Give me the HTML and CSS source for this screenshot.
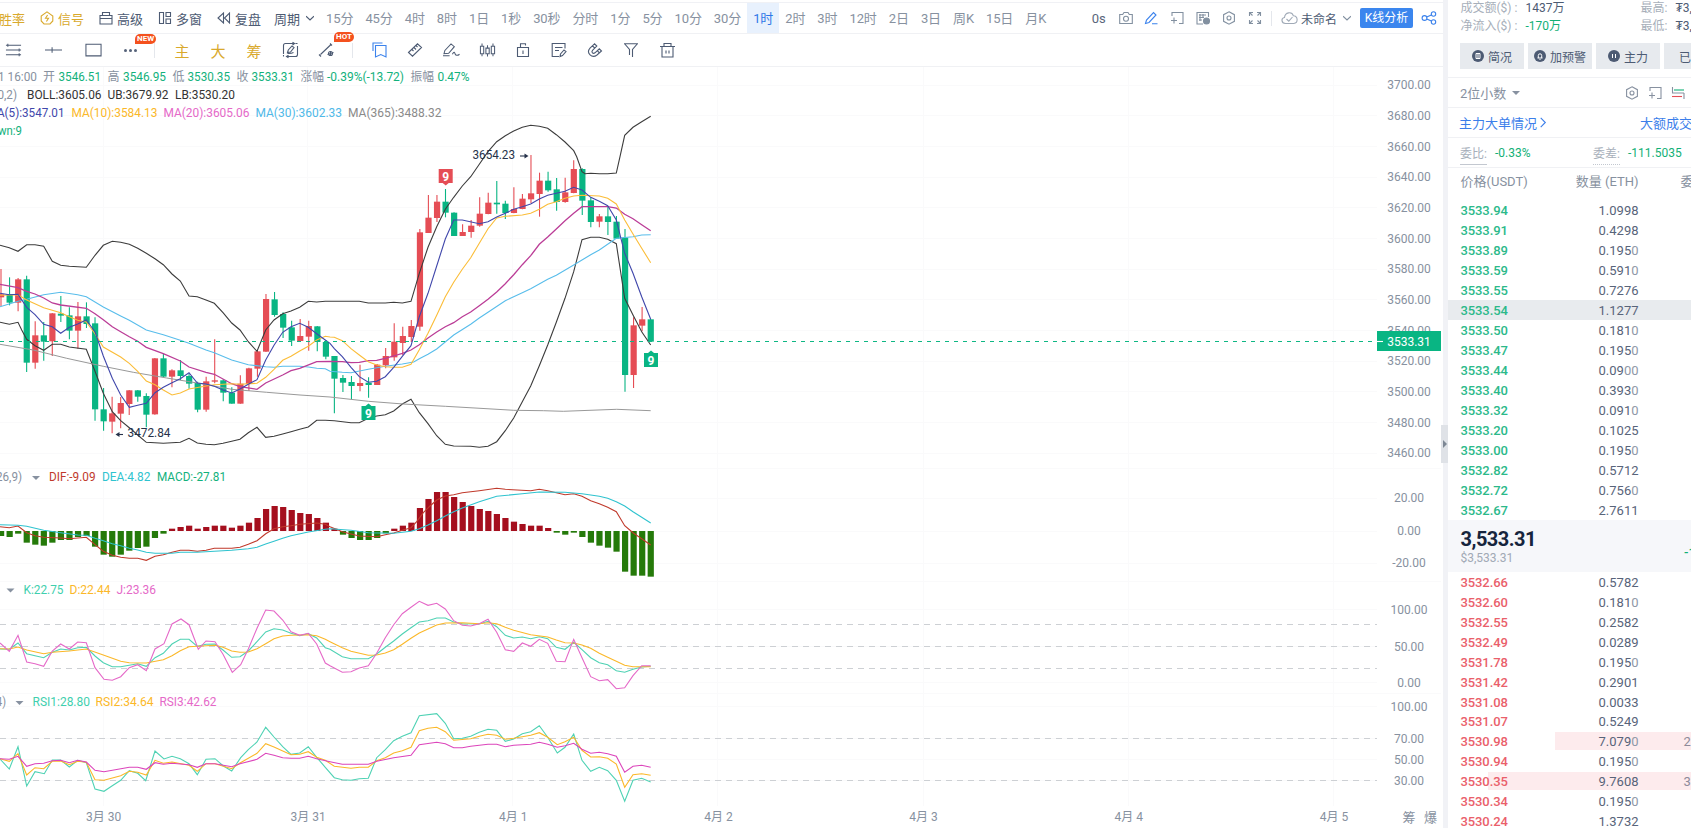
FILE: index.html
```html
<!DOCTYPE html>
<html lang="zh-CN">
<head>
<meta charset="UTF-8" />
<meta name="viewport" content="width=device-width, initial-scale=1" />
<title>ETH/USDT K线</title>
<link rel="stylesheet" href="styles.css">
</head>
<body>

<!-- shared icons -->
<svg class="defs" width="0" height="0">
  <symbol id="i-hex" viewBox="0 0 14 14"><path d="M7 .8 12.4 3.7v6.6L7 13.2 1.6 10.3V3.7z"/><circle cx="7" cy="7" r="2"/></symbol>
  <symbol id="i-frame" viewBox="0 0 14 14"><path d="M2 5V1.500h11v11H9M1 9.500h6M4 6.500v6"/></symbol>
  <symbol id="i-down" viewBox="0 0 8 8"><path d="M0 2.200 4 6 8 2.200"/></symbol>
</svg>

<div class="app">
  <main class="left">
    <div class="bar periods">
      <span class="tool gold">胜率</span>
      <span class="tool gold"><svg class="ico" viewBox="0 0 14 14"><path d="M7 .9 12.800 5v5L10 13H4L1.200 10V5z"/><path d="M7.600 4 5.500 7.300h3L6.400 10.500"/></svg>信号</span>
      <span class="tool"><svg class="ico" viewBox="0 0 14 14"><path d="M1 4.500h12v8.500H1zM1 7.500h12M3.500 4.500V1.500h7v3"/></svg>高级</span>
      <span class="tool"><svg class="ico" viewBox="0 0 14 14"><path d="M1.500 1.500h4v11h-4zM8 1.500h4.500v4H8zM8 8h4.500v4.500H8z"/></svg>多窗</span>
      <span class="tool"><svg class="ico" viewBox="0 0 14 14"><path d="M6.500 2v10L1 7zM12.500 2v10L7.500 7z"/></svg>复盘</span>
      <span class="tool cycle">周期<svg class="ico tiny"><use href="#i-down"/></svg></span>
      <div class="period-list">
        <span>15分</span><span>45分</span><span>4时</span><span>8时</span><span>1日</span><span>1秒</span><span>30秒</span><span>分时</span><span>1分</span><span>5分</span><span>10分</span><span>30分</span><span class="active">1时</span><span>2时</span><span>3时</span><span>12时</span><span>2日</span><span>3日</span><span>周K</span><span>15日</span><span>月K</span>
      </div>
      <div class="actions">
        <span class="cell dark">0s</span>
        <span class="cell"><svg class="ico" viewBox="0 0 14 14"><path d="M.7 3.500h3L5 1.500h4l1.300 2h3v9H.7z"/><circle cx="7" cy="7.800" r="2.500"/></svg></span>
        <span class="cell blue"><svg class="ico" viewBox="0 0 14 14"><path d="M1.500 12.500 2.500 9 9.500 1.500l2.500 2.500L5 11.500zM8 12.800h5.500"/></svg></span>
        <span class="cell"><svg class="ico"><use href="#i-frame"/></svg></span>
        <span class="cell"><svg class="ico" viewBox="0 0 14 14"><path d="M7 13H1V1.500h11.500V6M3 4h7M3 6.500h5M3 9h3M4 3v7M7 3v4"/><circle cx="10.500" cy="10" r="3" class="fill"/></svg></span>
        <span class="cell"><svg class="ico"><use href="#i-hex"/></svg></span>
        <span class="cell"><svg class="ico" viewBox="0 0 14 14"><path d="M1.500 5V1.500H5M9 1.500h3.500V5M12.500 9v3.500H9M5 12.500H1.500V9M2 2l2.500 2.500M12 2 9.500 4.500M12 12 9.500 9.500M2 12l2.500-2.500"/></svg></span>
        <span class="sep"></span>
        <span class="layout"><svg class="ico cloud" viewBox="0 0 17 14"><path d="M4.500 12.500C.2 12.300-.2 7 3.500 6.500 4 1 11 .2 12.300 4.700c5 .2 5 7.500.5 7.800zM5.500 8l2.300 2.200L11.500 6"/></svg>未命名<svg class="ico tiny"><use href="#i-down"/></svg></span>
        <button class="analyse">K线分析</button>
        <svg class="ico share" viewBox="0 0 16 14"><circle cx="3.500" cy="7" r="2.400"/><circle cx="12.500" cy="3" r="2.200"/><circle cx="12.500" cy="11" r="2.200"/><path d="M5.700 6 10.400 3.900M5.700 8l4.700 2.100"/></svg>
      </div>
    </div>

    <div class="bar drawing">
      <span class="cell w40"><svg class="ico big" viewBox="0 0 18 14"><path d="M1 2h16M1 7h16M1 12h16"/><path d="M3 .5v3M15 5.500v3M15 10.500v3"/></svg></span>
      <span class="cell w40"><svg class="ico big" viewBox="0 0 18 14"><path d="M0 7h18M7.500 4v6"/></svg></span>
      <span class="cell w40"><svg class="ico big" viewBox="0 0 18 14"><path d="M1 .8h16v12.400H1z"/></svg></span>
      <span class="cell more"><i></i><i></i><i></i><b class="tag new">NEW</b></span>
      <span class="sep"></span>
      <span class="cell gold">主</span>
      <span class="cell gold">大</span>
      <span class="cell gold">筹</span>
      <span class="cell"><svg class="ico big" viewBox="0 0 16 16"><path d="M1 12V3.500Q1 1.500 3 1.500h9M10 .2l2 1.300-2 1.500M15 4v8.500q0 2-2 2H4M6 13.200l-2 1.300 2 1.300M13 1.500h2M1 14.500V13"/><path d="M5 10.500 5.800 8 9.500 4 11.500 5.500 8 10zM5 11.500c2 0 3 .5 6-1"/></svg></span>
      <span class="cell"><svg class="ico big" viewBox="0 0 16 16"><path d="M2 12.500 12.500 2.500M.5 12.500l2 2M11.500 1.500l2 2"/><circle cx="12" cy="11.500" r="2"/><path d="M9 12.500l6-2M12 9v5"/></svg><b class="tag hot">HOT</b></span>
      <span class="sep"></span>
      <span class="cell blue"><svg class="ico big" viewBox="0 0 16 16"><path d="M1.500 9V1H11M4 3.500h10.500v11.500L9.300 12.500 4 15z"/></svg></span>
      <span class="cell"><svg class="ico" viewBox="0 0 14 14"><path d="M.5 9.500 9.500.8 13.500 4.500 4.500 13.200zM4 6.500l1.500 1.500M6 4.500l2 2M8 2.500l1.500 1.500"/></svg></span>
      <span class="cell"><svg class="ico big" viewBox="0 0 18 14"><path d="M1 11 2 7.500 8.500.5 12 3.500 6 10.500zM0 13h7M10 11.500c2-4 2.500-1 3 0s2 2 4.500 0"/></svg></span>
      <span class="cell"><svg class="ico big" viewBox="0 0 18 16"><path d="M1.500 4H5v8H1.500zM7.300 6h3.500v6H7.300zM13 4h3.500v8H13zM3.200 1v3M3.200 12v2.500M9 3v3M9 12v3M14.800 1v3M14.800 12v2.500"/></svg></span>
      <span class="cell"><svg class="ico" viewBox="0 0 14 14"><path d="M1.500 4.500h11v9h-11zM4.500 4.500V.8h5v1.700M7 7.500V11"/></svg></span>
      <span class="cell"><svg class="ico" viewBox="0 0 14 14"><path d="M13 5.500V.5H.2v13H7M3 4.500h7.500M3 7.500h4M8 13.500l.5-2.500L12 7l2 1.500-3.500 4z"/></svg></span>
      <span class="cell"><svg class="ico" viewBox="0 0 14 14"><path d="M6.500.8 2 5.200C-2.200 10.200 4 15.800 9 12l4.500-4-2.200-2.200L7 9.800c-2 1.500-4-.6-2.500-2.500l4.300-4.200zM4.500 2.800 6.700 5M9.300 7.700l2.200 2.300"/></svg></span>
      <span class="cell"><svg class="ico" viewBox="0 0 14 14"><path d="M0 .8h14M.8 1 5.500 6.500V12M13.200 1 8.500 6.500V14"/></svg></span>
      <span class="cell"><svg class="ico big" viewBox="0 0 16 16"><path d="M.5 4.500h15M2.500 4.500V15h11V4.500M4.500 4.500V1.500h7v3M6.500 8.500v3M9.500 8.500v3"/></svg></span>
    </div>

    <svg class="chart" id="chart" viewBox="0 67 1443 761"></svg>
  </main>

  <div class="divider"><span class="handle"></span></div>

  <aside class="book">
    <div class="stats">
      <div><label>成交额($) :</label><em>1437万</em><label>最高:</label><em>₮3,5</em></div>
      <div><label>净流入($) :</label><em class="up">-170万</em><label>最低:</label><em>₮3,5</em></div>
    </div>
    <div class="buttons">
      <span><svg class="badge" viewBox="0 0 12 12"><circle cx="6" cy="6" r="6"/><path d="M4 3.500h4v5H4zM5 5h2M5 7h2"/></svg>简况</span>
      <span><svg class="badge" viewBox="0 0 12 12"><circle cx="6" cy="6" r="6"/><path d="M3.500 8h5M4.300 8V5.500a1.700 1.700 0 0 1 3.400 0V8M5.500 9.500h1"/></svg>加预警</span>
      <span><svg class="badge" viewBox="0 0 12 12"><circle cx="6" cy="6" r="6"/><path d="M4.500 4v4M7.500 4v4"/></svg>主力</span>
      <span class="cut">已</span>
    </div>
    <div class="line decimals">
      <span>2位小数</span><i class="caret"></i>
      <svg class="ico first"><use href="#i-hex"/></svg>
      <svg class="ico"><use href="#i-frame"/></svg>
      <svg class="ico" viewBox="0 0 14 14"><path d="M1.500 1v6H13M13 7v6"/><path class="g" d="M3 4h10"/><path class="r" d="M1 10.500h10"/></svg>
    </div>
    <div class="line links"><span>主力大单情况</span><svg class="ico tiny" viewBox="0 0 8 12"><path d="M1.500 1 6.500 6l-5 5"/></svg><span class="next">大额成交</span></div>
    <div class="line ratio"><label>委比:</label><em>-0.33%</em><label class="dot">委差:</label><em>-111.5035</em></div>
    <div class="head"><span>价格(USDT)</span><span class="qty">数量 (ETH)</span><span class="sum">委托额</span></div>
    <div class="rows asks" id="asks"></div>
    <div class="last">
      <strong>3,533.31</strong>
      <small>$3,533.31</small>
      <span class="change">-13.72</span>
    </div>
    <div class="rows bids" id="bids"></div>
  </aside>
</div>

<script src="chart.js"></script>
</body>
</html>
```
FILE: styles.css
```css
* { box-sizing: border-box; }
body {
  margin: 0;
  width: 1691px;
  height: 828px;
  overflow: hidden;
  background: #fff;
  color: #4d5b73;
  font-family: Roboto, "Noto Sans CJK SC", sans-serif;
  font-size: 13px;
}
.defs { display: block; }
em { font-style: normal; }
.app { display: flex; height: 828px; }
.left { width: 1443px; flex: none; padding-top: 2px; }

/* toolbars */
.bar {
  display: flex;
  align-items: center;
  border-bottom: 1px solid #f0f1f4;
  white-space: nowrap;
}
.periods { height: 32px; border-top: 1px solid #f0f1f5; }
.drawing { height: 33px; }
.ico {
  width: 14px;
  height: 14px;
  flex: none;
  fill: none;
  stroke: currentColor;
  stroke-width: 1.1;
  overflow: visible;
}
.ico.big { width: 17px; height: 16px; }
.ico.tiny { width: 8px; height: 8px; stroke-width: 1.2; }
.ico .fill { fill: currentColor; }
.tool { display: flex; align-items: center; gap: 4px; margin-right: 15px; }
.tool:first-child { margin-left: -1px; }
.cycle { gap: 6px; margin-left: -2px; margin-right: 6px; }
.gold { color: #d9a92c; }
.blue { color: #3b82ec; }
.dark { color: #5a667c; }
.period-list { display: flex; align-self: stretch; color: #8791a0; }
.period-list span { padding: 0 6px; line-height: 31px; letter-spacing: -0.1px; }
.period-list .active { background: #e8f1fd; color: #2f78e8; }
.actions { display: flex; align-items: center; margin-left: auto; padding-right: 6px; color: #8290a0; }
.actions .cell { width: 25.9px; }
.actions .dark { width: 28px; }
.actions .blue { color: #3b82ec; }
.sep { width: 1px; height: 15px; background: #e4e7ec; }
.actions .sep { margin: 0 9px 0 3px; }
.layout { display: flex; align-items: center; font-size: 12px; color: #4d5b73; }
.layout .tiny { margin-left: 6px; color: #8290a0; }
.cloud { width: 17px; margin-right: 3px; color: #a0aab7; }
.analyse {
  width: 53px;
  height: 20px;
  margin: 0 8px 0 9px;
  padding: 0;
  border: 0;
  border-radius: 2px;
  background: #3b86ee;
  color: #fff;
  font: 12px/20px Roboto, "Noto Sans CJK SC", sans-serif;
}
.share { width: 16px; color: #3b82ec; }

.cell { position: relative; display: flex; justify-content: center; align-items: center; flex: none; }
.drawing .cell { width: 36px; }
.drawing .w40 { width: 40px; }
.drawing .w40:first-child { margin-left: -7px; }
.drawing .more { width: 34px; gap: 2px; margin-right: 7px; }
.more i { width: 3px; height: 3px; border-radius: 2px; background: #56637a; }
.drawing .gold { font-size: 15px; }
.drawing .sep + .gold { margin-left: 9px; }
.drawing .sep + .blue { margin-left: 8px; }
.drawing .cell:not(.more) + .sep { margin-left: 8px; }
.tag {
  position: absolute;
  left: 22px;
  top: -13px;
  padding: 0 2px;
  border-radius: 5px 5px 5px 0;
  background: #f4511e;
  color: #fff;
  font-size: 8px;
  line-height: 10px;
}
.tag.hot { left: 26px; top: -10px; }
.tag.new { top: -15px; }

/* chart */
.chart { display: block; width: 1443px; height: 761px; font-size: 12px; }
.chart text { fill: #8791a0; }
.chart .mid { text-anchor: middle; }
.chart path, .chart polyline, .chart line { fill: none; stroke-width: 1.1; }
.chart .grid { stroke: #fafafb; stroke-width: 1; }
.chart .dash { stroke: #cdd0d4; stroke-width: 1; stroke-dasharray: 6 5; }
.chart .now { stroke: #0fb784; stroke-width: 1; stroke-dasharray: 4 5; }
.chart .rise { fill: #e54d55; stroke: #e54d55; }
.chart .fall { fill: #09b583; stroke: #09b583; }
.chart rect.rise, .chart rect.fall { stroke: none; }
.chart .macd-up { fill: #a50f1e; }
.chart .macd-down { fill: #257a0a; }
.chart .band { stroke: #3c3c3c; }
.chart .ma5 { stroke: #4047ab; }
.chart .ma10 { stroke: #fbbd38; }
.chart .ma20 { stroke: #bb3d97; stroke-width: 1.3; }
.chart .ma30 { stroke: #58bdeb; }
.chart .ma365 { stroke: #999; stroke-width: 1; }
.chart .dif { stroke: #c0392b; }
.chart .dea { stroke: #2fc3cf; }
.chart .teal { stroke: #4fd2b4; }
.chart .amber { stroke: #fbb829; }
.chart .pink { stroke: #e569c8; }
.chart .magenta { stroke: #dc45bb; }
.chart .white { fill: #fff; }
.chart .bold { font-weight: 700; font-size: 12px; }
.chart .arrow { stroke: #26324a; }

.divider { position: relative; width: 5px; flex: none; background: #f1f2f6; }
.handle {
  position: absolute;
  left: -2px;
  top: 425px;
  width: 7px;
  height: 38px;
  background: #dfe2e7;
}
.handle::after {
  content: "";
  position: absolute;
  left: 2px;
  top: 15px;
  border: 4px solid transparent;
  border-left-color: #7d8794;
  border-right: 0;
}

/* order book */
.book { width: 243px; flex: none; overflow: hidden; white-space: nowrap; }
.stats { height: 43px; font-size: 12px; }
.stats div { display: grid; grid-template-columns: 65px 115px 35px 60px; padding-left: 12.5px; height: 18px; line-height: 16px; }
.stats label, .ratio label { color: #a7afba; }
.stats .up, .ratio em { color: #12b076; }
.buttons { display: flex; gap: 4px; padding-left: 12px; height: 34px; }
.buttons span {
  display: flex;
  align-items: center;
  justify-content: center;
  gap: 4px;
  flex: none;
  width: 64px;
  height: 26px;
  background: #e7eaee;
  font-size: 12px;
}
.buttons .cut { justify-content: flex-start; padding-left: 15px; }
.badge { width: 12px; height: 12px; fill: #4d5b73; }
.badge path { fill: none; stroke: #fff; }
.line { display: flex; align-items: center; height: 30px; padding-left: 12px; border-top: 1px solid #f0f1f4; }
.decimals { color: #8791a0; }
.caret { margin-left: 6px; border: 4px solid transparent; border-top-color: #8791a0; border-bottom: 0; }
.decimals .ico { margin-right: 9px; width: 14px; }
.decimals .first { margin-left: 105px; }
.decimals .g { stroke: #12b076; }
.decimals .r { stroke: #e54d55; }
.links { padding-left: 11px; color: #3b7eea; }
.links .tiny { height: 11px; margin-left: 2px; }
.links .next { margin-left: 93px; }
.ratio { font-size: 12px; border-bottom: 1px solid #f0f1f4; height: 31px; }
.ratio label { flex: none; width: 27px; margin-right: 8px; padding-top: 5px; line-height: 19px; border-bottom: 1px solid #c3c8d0; }
.ratio label.dot { border-bottom-style: dotted; }
.ratio em { flex: none; width: 98px; }
.head, .row { display: grid; grid-template-columns: 90px 88px 60px; padding-left: 12.5px; }
.head { height: 32px; line-height: 27px; color: #8791a0; }
.qty { text-align: right; }
.sum { padding-left: 42px; }
.row { position: relative; height: 20px; line-height: 21px; color: #58647a; }
.bids .row { height: 19.93px; }
.row span { position: relative; }
.row .sum { padding-left: 45px; color: #8d8a99; }
.row .price { font-weight: 500; letter-spacing: -0.1px; }
.asks .price { color: #2cb98a; }
.bids .price { color: #ea5f6b; }
.row .zero { color: #8f98a7; }
.row.hover { background: #e8ebee; }
.depth { position: absolute; right: 0; top: 1px; height: 18px; background: #fdebed; }
.last { position: relative; height: 52px; padding: 7px 12.5px; background: #f6f7fa; }
.last strong { display: block; font-size: 20px; line-height: 24px; font-weight: 700; color: #16253d; letter-spacing: -0.5px; }
.last small { display: block; font-size: 12px; line-height: 15px; color: #a1a9b5; }
.change { position: absolute; left: 236px; top: 25px; color: #12b076; font-weight: 500; }
```
FILE: chart.js
```js
const svg = document.getElementById('chart');
const STEP = 8.548;
let out = '';

// series are kept in two windows at 3 units per pixel: [offsetX, offsetY]
const P1 = [0, 200], P2 = [330, 110];
const S1 = [0, 460], S2 = [330, 460];

function points(str, o) {
  return str.trim().split(/\s+/).map(p => {
    const [x, y] = p.split(',').map(Number);
    return (o[0] + x / 3).toFixed(1) + ',' + (o[1] + y / 3).toFixed(1);
  });
}
function line(cls, a, b, sub) {
  const left = points(a, sub ? S1 : P1).filter(p => parseFloat(p) < 329);
  out += `<polyline class="${cls}" points="${left.concat(points(b, sub ? S2 : P2)).join(' ')}"/>`;
}
function text(x, y, str, attrs) {
  out += `<text x="${x}" y="${y + 4.5}" ${attrs || ''}>${str}</text>`;
}
// text that runs from x1 to x2
function label(x1, x2, y, str, color) {
  text(x1, y, str, `textLength="${x2 - x1}" lengthAdjust="spacingAndGlyphs" style="fill:${color}"`);
}
function hline(y, cls, x2) {
  out += `<line class="${cls}" x1="0" x2="${x2 || 1377}" y1="${y}" y2="${y}"/>`;
}

// grid and axes
const days = [[103.6, '3月 30'], [308.2, '3月 31'], [513.3, '4月 1'], [718.4, '4月 2'], [923.6, '4月 3'], [1128.8, '4月 4'], [1334, '4月 5']];
days.forEach(([x, d]) => {
  out += `<line class="grid" x1="${Math.round(x) - 0.5}" x2="${Math.round(x) - 0.5}" y1="67" y2="806"/>`;
  text(x, 816.7, d, 'class="mid"');
});
for (let i = 0; i <= 12; i++) {
  const y = 84.7 + i * 30.67;
  hline(Math.round(y) + 0.5, 'grid');
  text(1409, y, (3700 - i * 20) + '.00', 'class="mid"');
}
[[497.7, '20.00'], [530.7, '0.00'], [562.5, '-20.00'], [609.3, '100.00'], [646, '50.00'], [682, '0.00'], [706, '100.00'], [738, '70.00'], [759, '50.00'], [780, '30.00']]
  .forEach(([y, t]) => { hline(Math.round(y) + 0.5, 'grid'); text(1409, y, t, 'class="mid"'); });
hline(468.5, 'grid', 1441); hline(581.5, 'grid', 1441); hline(693.5, 'grid', 1441);
[624.5, 646.5, 668.5, 738.5, 780.5].forEach(y => hline(y, 'dash'));
text(1409, 817, '筹', 'class="mid" style="font-size:13px"');
text(1430.5, 817, '爆', 'class="mid" style="font-size:13px"');

// candles: direction, high, body top, body bottom, low
const candles = [
  'r 207 283 292 318', 'g 232 282 308 316', 'r 234 238 308 334', 'g 227 238 488 516', 'r 364 406 488 506',
  'g 366 406 425 482', 'r 339 340 424 468', 'g 288 341 347 366', 'g 322 346 392 418', 'r 306 349 392 446',
  'g 307 349 372 384', 'g 352 370 628 662', 'g 564 628 664 692', 'r 590 640 665 700', 'r 591 609 641 685',
  'r 570 571 612 645', 'g 570 571 590 605', 'g 580 588 644 682', 'r 474 475 643 644', 'g 462 475 530 531',
  'r 508 511 530 562', 'g 480 511 528 540', 'g 520 528 551 566', 'g 545 549 629 637', 'r 530 544 629 635',
  'r 418 541 545 550', 'g 538 541 578 604', 'g 562 578 611 611', 'r 526 551 611 611', 'r 503 505 552 573',
  'r 450 454 506 530', 'r 282 297 455 456', 'g 276 298 345 350', 'g 337 342 383 414', 'g 362 382 422 438',
  'r 357 408 423 424', 'r 362 378 410 452', 'g 378 379 426 454', 'g 420 426 470 478',
  'g 738 738 806 910', 'g 795 804 818 846', 'g 798 816 828 868', 'r 764 819 828 844', 'g 802 818 825 863',
  'r 762 764 825 825', 'r 714 738 766 775', 'r 640 695 742 752', 'r 650 678 699 735', 'r 630 648 681 696',
  'r 357 367 650 662', 'r 255 323 369 369', 'r 255 275 324 336', 'g 237 275 308 322', 'g 307 308 378 378',
  'r 343 366 378 378', 'r 330 347 366 383', 'r 262 311 347 350', 'r 248 278 312 313', 'g 213 278 283 311',
  'g 272 281 309 327', 'r 232 297 309 310', 'r 252 266 297 298', 'r 135 250 268 280', 'r 188 212 252 320',
  'g 185 212 241 245', 'g 204 238 276 302', 'r 203 247 276 278', 'r 151 177 249 250', 'g 175 177 272 315',
  'g 262 271 336 352', 'r 312 319 335 352', 'g 290 319 336 375', 'g 318 335 386 386', 'g 357 383 795 845',
  'r 622 646 795 834', 'r 591 628 647 664', 'g 627 628 695 696'
];
candles.forEach((c, i) => {
  const [dir, ...v] = c.split(' ');
  const base = i < 39 ? 200 : 110;
  const [h, t, b, l] = v.map(n => base + n / 3);
  const cls = dir === 'r' ? 'rise' : 'fall';
  const x = 1 + i * STEP;
  out += `<line class="${cls}" x1="${x}" x2="${x}" y1="${h}" y2="${l}"/>`;
  out += `<rect class="${cls}" x="${x - 3}" y="${t}" width="6.2" height="${b - t}"/>`;
});

line('band', '0,136 28,143 54,154 80,134 105,134 131,139 157,184 182,196 208,199 259,202 285,166 310,136 337,124 362,127 388,133 413,145 439,160 465,176 490,194 516,222 541,243 567,288 592,290 618,300 643,310 669,338 695,369 720,390 745,425 771,454 797,390 822,360 848,341 873,333 899,322 925,304 950,306 976,304',
  '13,574 88,574 115,579 166,579 191,577 217,579 243,574 268,490 294,412 320,350 346,298 371,262 397,228 422,200 448,163 474,125 500,95 526,77 551,63 577,52 602,46 628,49 653,55 679,74 705,96 731,122 740,140 756,185 765,191 782,190 808,191 833,191 859,189 870,140 884,76 909,52 935,35 962,19');
line('band', '0,367 28,373 54,367 65,390 80,418 105,437 131,451 157,433 182,433 208,441 259,448 285,514 310,580 337,635 362,662 388,683 413,705 439,727 490,730 541,727 567,715 592,729 618,733 643,734 669,730 695,724 720,718 745,698 771,682 797,712 822,709 848,702 873,695 899,688 925,681 950,661 976,661',
  '13,932 63,938 88,938 115,925 140,918 166,914 191,903 217,882 243,868 268,908 294,941 320,977 346,1003 371,1008 422,1009 448,1012 474,1009 500,995 526,962 551,924 577,875 602,828 628,767 653,705 679,637 705,565 731,485 756,389 782,382 808,382 833,388 859,401 884,565 909,615 935,665 962,705');
line('ma365', '0,433 100,450 200,475 310,499 400,517 500,534 592,549 695,568 800,577 900,585',
  '0,861 115,874 220,882 346,889 450,895 551,901 640,902 700,904 780,901 860,898 962,902');
line('ma30', '0,320 54,304 80,298 131,284 182,277 233,284 259,290 310,321 362,348 388,361 439,390 490,404 541,421 567,430 618,450 643,458 695,480 745,494 797,500 822,502 848,499 899,499 925,501 950,505 976,506',
  '0,784 37,787 63,788 115,778 166,769 217,762 251,756 268,746 294,733 320,717 371,675 422,643 448,624 474,607 526,572 577,548 602,536 653,508 679,496 731,465 782,434 808,420 859,385 909,380 935,375 962,374');
line('ma20', '0,253 54,263 80,274 105,282 131,294 157,309 182,315 259,325 285,341 310,359 337,380 362,395 388,410 413,424 439,442 490,461 541,483 567,501 618,517 643,523 695,551 720,560 771,568 797,549 848,525 873,512 899,505 950,485',
  '0,754 37,755 63,758 88,757 115,752 140,751 166,745 191,738 217,730 243,720 268,704 294,684 320,666 346,650 371,638 397,620 422,606 448,587 474,568 500,546 526,521 551,494 577,464 602,437 628,403 653,381 679,357 705,332 731,310 756,290 833,290 859,294 884,313 909,326 935,344 962,362');
line('ma10', '0,286 54,284 80,300 131,323 182,338 208,350 233,361 259,366 285,401 310,441 362,471 388,490 413,514 439,543 465,554 490,570 516,585 541,579 567,567 618,558 643,554 695,551 720,553 771,550 797,532 822,508 848,481 873,469 899,453 925,439 950,420 976,409',
  '0,681 13,682 37,692 63,716 88,735 115,755 140,765 166,770 191,772 217,772 243,763 268,719 294,670 320,616 346,560 371,517 397,478 422,443 448,400 474,356 500,324 526,319 577,315 602,310 628,298 653,283 679,275 705,265 731,258 756,256 808,258 833,265 859,282 884,330 909,372 935,415 962,458');
line('ma5', '0,280 28,284 54,283 80,322 105,344 131,373 157,380 182,400 208,382 233,372 259,360 285,395 310,468 337,535 362,585 388,622 413,616 439,610 465,578 490,562 516,548 541,536 567,518 592,549 618,552 643,559 669,570 695,579 720,567 745,553 771,539 797,480 822,436 848,397 873,380 899,370 925,382 950,401 976,420',
  '0,700 13,716 37,740 63,772 88,800 115,817 140,814 166,800 191,772 217,739 243,707 268,620 294,550 320,468 346,387 371,330 397,330 448,341 474,335 500,321 526,310 551,298 577,290 602,282 628,267 653,256 679,250 705,244 731,232 756,240 782,262 808,274 833,287 859,330 884,430 909,490 935,560 962,628');

// current price
out += '<line class="now" x1="0" x2="1377" y1="341.5" y2="341.5"/>';
out += '<rect class="fall" x="1377" y="331" width="64" height="20"/><path d="M1377 341.5h6" stroke="#fff"/>';
text(1409, 341, '3533.31', 'class="mid white"');

// high / low notes
label(472.5, 515, 154.5, '3654.23', '#26324a');
out += '<path class="arrow" d="M520 156h7"/><path style="fill:#26324a" d="M524.5 153.5l4 2.5-4 2.5z"/>';
label(127.5, 170.5, 432.5, '3472.84', '#26324a');
out += '<path class="arrow" d="M117 434.5h6"/><path style="fill:#26324a" d="M119.500 432l-4 2.5 4 2.5z"/>';

// nine-turn marks
function mark(x, y, cls, up) {
  const d = up ? `M${x - 3} ${y - 7}l3-2.5 3 2.5z` : `M${x - 3} ${y + 7}l3 2.5 3-2.5z`;
  out += `<rect class="${cls}" x="${x - 7}" y="${y - 7}" width="14" height="14"/><path style="fill:${up ? '#09b583' : '#e54d55'}" d="${d}"/>`;
  text(x, y, '9', 'class="mid white bold"');
}
mark(445.7, 176, 'rise', false);
mark(368.5, 413, 'fall', true);
mark(651, 360, 'fall', true);

// MACD
const macd = [228, 231, 221, 248, 254, 257, 248, 240, 240, 231, 228, 260, 284, 290, 284, 272, 264, 260, 234, 221, 206, 201, 197, 206, 201, 197, 197, 203, 197, 188, 174, 147, 138, 141, 150, 159, 162, 174, 188, 206, 224, 234, 240, 240, 234, 220, 206, 197, 188, 144, 117, 96, 96, 111, 126, 138, 147, 153, 162, 174, 185, 192, 197, 197, 204, 218, 224, 218, 231, 248, 257, 263, 275, 335, 347, 347, 350];
macd.forEach((v, i) => {
  const y = 460 + v / 3, up = v < 213;
  out += `<rect class="${up ? 'macd-up' : 'macd-down'}" x="${1 + i * STEP - 3}" y="${up ? y : 531}" width="6.2" height="${Math.abs(531 - y)}"/>`;
});
line('dif', '0,200 28,203 54,198 80,218 105,227 131,232 182,234 208,236 259,232 285,254 310,274 337,286 362,292 388,295 413,295 439,301 465,289 490,284 516,277 541,271 567,271 592,274 618,271 643,265 695,265 720,262 745,253 771,242 797,221 822,206 848,200 873,197 899,193 950,189 976,193',
  '0,200 37,215 63,222 88,228 140,230 166,224 191,219 217,211 243,203 260,185 280,158 300,138 320,120 346,108 371,104 397,98 448,92 500,85 526,88 602,92 628,88 653,92 679,98 705,104 731,101 756,109 782,122 808,131 833,142 859,155 884,197 909,218 935,236 962,255', true);
line('dea', '0,194 54,196 80,199 131,211 182,218 233,225 259,226 285,235 310,242 337,251 362,257 388,265 413,270 439,277 465,280 516,280 541,277 592,277 643,274 695,271 745,266 771,262 797,252 822,244 848,235 873,227 925,216 976,208',
  '0,206 63,211 115,218 191,220 217,217 243,214 268,206 294,195 320,182 346,168 371,155 397,144 448,125 500,109 577,101 628,96 705,97 756,101 808,109 833,115 859,125 884,138 909,155 935,172 962,189', true);

// KDJ
line('teal', '0,567 28,568 54,549 80,581 105,587 131,593 157,577 182,567 208,570 233,563 259,562 285,588 310,608 337,620 362,620 413,611 439,619 465,593 490,580 516,552 541,538 567,538 592,559 618,553 645,552 669,570 695,592 720,590 745,573 771,545 797,516 822,506 848,510 873,520 899,527 925,521 950,534 976,563',
  '0,568 37,590 63,596 115,596 140,582 166,562 191,543 217,522 243,503 268,486 294,482 320,474 346,474 371,486 397,491 448,492 474,484 500,500 526,526 551,534 577,531 602,536 628,530 653,536 679,562 705,568 731,547 756,569 782,593 808,608 833,614 859,632 884,637 909,628 935,621 962,619', true);
line('amber', '0,566 28,567 54,561 80,570 131,581 157,577 208,573 259,567 310,585 362,604 388,608 439,609 490,599 516,587 541,572 567,560 592,559 645,556 669,562 695,573 720,577 745,576 771,566 797,551 822,536 848,528 873,526 925,524 950,527 976,538',
  '0,545 37,563 63,574 115,586 140,585 166,579 191,569 217,553 243,535 268,519 294,507 320,495 346,489 397,488 448,491 474,488 500,491 526,502 551,511 602,524 653,531 679,540 705,548 731,549 756,555 782,565 808,580 833,592 859,604 884,616 909,620 962,620', true);
line('pink', '0,549 28,574 54,526 80,606 105,611 131,619 157,573 182,552 208,567 233,546 259,548 285,623 312,658 337,661 362,650 388,623 413,614 439,632 465,567 492,551 516,492 543,477 567,494 595,568 618,543 645,545 669,583 697,637 722,614 745,567 771,505 797,450 822,453 848,480 873,515 899,526 925,520 950,552 976,609',
  '0,617 37,637 63,635 88,624 115,617 140,580 166,533 191,494 217,461 243,442 268,424 294,436 320,430 346,447 371,482 397,496 422,498 448,491 474,478 500,517 526,569 551,574 577,549 602,559 628,538 653,550 679,604 705,605 731,538 756,593 782,650 808,662 833,659 859,686 884,683 909,647 935,617 962,617', true);

// RSI
line('teal', '0,897 28,927 54,860 80,978 105,935 133,941 157,900 182,900 208,921 233,901 259,908 285,987 312,994 337,977 362,961 388,932 413,940 437,962 465,873 492,897 516,889 541,896 567,911 592,944 618,898 645,896 669,917 695,933 722,893 745,869 771,846 797,802 822,831 848,860 873,883 899,879 925,860 950,892 976,922',
  '13,953 37,959 63,961 88,956 115,955 140,893 166,869 191,842 217,829 243,818 268,767 320,761 346,790 371,836 397,835 422,829 448,817 474,808 500,811 526,844 551,837 577,821 602,815 628,797 653,832 682,879 705,862 731,822 756,901 782,934 808,922 833,932 859,961 884,1024 909,961 935,955 962,966', true);
line('amber', '0,896 28,904 54,881 80,945 105,923 131,926 157,904 182,903 208,914 233,904 259,907 285,959 312,961 362,947 388,934 413,937 439,945 465,901 490,910 516,906 567,916 592,934 618,911 645,911 695,926 720,909 771,880 797,851 822,861 873,884 899,883 925,875 950,892 976,901',
  '13,919 63,925 88,922 115,922 140,902 166,893 191,879 217,872 243,862 268,812 294,805 320,802 346,815 371,841 422,836 448,829 474,823 500,826 526,838 551,835 577,830 602,826 628,818 653,832 682,854 705,845 731,832 756,871 782,891 808,890 833,895 859,912 884,982 909,944 935,941 962,946', true);
line('magenta', '0,896 28,898 54,889 80,919 105,911 131,910 157,902 182,901 208,908 233,901 259,906 285,931 312,935 388,922 413,922 439,928 465,908 490,913 516,910 567,914 592,922 618,911 645,911 695,920 720,911 771,898 797,880 822,886 848,893 873,895 899,895 925,889 950,896',
  '0,905 37,913 115,913 140,904 191,893 243,886 268,854 320,847 346,851 371,863 397,863 422,859 474,853 500,853 526,860 551,856 602,853 628,847 653,853 682,862 705,857 731,850 756,868 782,880 808,877 833,881 859,889 884,937 909,919 935,916 962,922', true);

// legends
const gray = '#8791a0', green = '#12b17c', pink = '#e569c8', amber = '#fbb829', teal = '#3fcfae';
label(-2, 37, 76.7, '1 16:00', gray);
label(43, 55, 76.7, '开', gray); label(58.5, 101, 76.7, '3546.51', green);
label(107.5, 119.5, 76.7, '高', gray); label(123, 166, 76.7, '3546.95', green);
label(172.5, 184.5, 76.7, '低', gray); label(187.5, 230, 76.7, '3530.35', green);
label(236.5, 248.5, 76.7, '收', gray); label(251.5, 294, 76.7, '3533.31', green);
label(300.5, 324, 76.7, '涨幅', gray); label(327, 404, 76.7, '-0.39%(-13.72)', green);
label(410.5, 434, 76.7, '振幅', gray); label(437.5, 469.5, 76.7, '0.47%', green);
label(-2.5, 17, 94.7, '0,2)', gray);
label(27, 101.5, 94.7, 'BOLL:3605.06', '#333'); label(107.5, 168.5, 94.7, 'UB:3679.92', '#333'); label(175, 235, 94.7, 'LB:3530.20', '#333');
label(-3, 64.5, 112.7, 'A(5):3547.01', '#4047ab'); label(71.5, 157.5, 112.7, 'MA(10):3584.13', amber);
label(163.5, 249.5, 112.7, 'MA(20):3605.06', pink); label(255.5, 342, 112.7, 'MA(30):3602.33', '#4fb9e8'); label(348, 441.5, 112.7, 'MA(365):3488.32', '#8a8a8a');
label(-2, 22, 130.7, 'wn:9', green);
label(-4, 22, 476.7, '26,9)', gray);
label(49, 95.5, 476.7, 'DIF:-9.09', '#c0392b'); label(102, 150.5, 476.7, 'DEA:4.82', '#2fc3cf'); label(157, 226, 476.7, 'MACD:-27.81', green);
label(23.5, 63.5, 589.5, 'K:22.75', teal); label(69.5, 110.5, 589.5, 'D:22.44', amber); label(116.5, 156, 589.5, 'J:23.36', pink);
label(-4, 6, 701.7, '4)', gray);
label(32.5, 90, 701.7, 'RSI1:28.80', teal); label(95.5, 153.5, 701.7, 'RSI2:34.64', amber); label(159.5, 216.5, 701.7, 'RSI3:42.62', pink);
[[36, 478], [10.5, 590.5], [19.5, 703]].forEach(([x, y]) => {
  out += `<path style="fill:#8791a0" d="M${x - 4} ${y - 2}h8l-4 4z"/>`;
});

svg.innerHTML = out;

// order book: price, amount, start of total, depth width, hovered
const asks = [
  ['3533.94', '1.0998'], ['3533.91', '0.4298'], ['3533.89', '0.1950'], ['3533.59', '0.5910'],
  ['3533.55', '0.7276'], ['3533.54', '1.1277', '', 0, true], ['3533.50', '0.1810'], ['3533.47', '0.1950'],
  ['3533.44', '0.0900'], ['3533.40', '0.3930'], ['3533.32', '0.0910'], ['3533.20', '0.1025'],
  ['3533.00', '0.1950'], ['3532.82', '0.5712'], ['3532.72', '0.7560'], ['3532.67', '2.7611']
];
const bids = [
  ['3532.66', '0.5782'], ['3532.60', '0.1810'], ['3532.55', '0.2582'], ['3532.49', '0.0289'],
  ['3531.78', '0.1950'], ['3531.42', '0.2901'], ['3531.08', '0.0033'], ['3531.07', '0.5249'],
  ['3530.98', '7.0790', '2', 136], ['3530.94', '0.1950'], ['3530.35', '9.7608', '3', 203],
  ['3530.34', '0.1950'], ['3530.24', '1.3732']
];
function renderRows(id, rows) {
  document.getElementById(id).innerHTML = rows.map(([price, qty, sum, depth, hover]) => {
    const amount = qty.replace(/0+$/, z => `<span class="zero">${z}</span>`);
    return `<div class="row${hover ? ' hover' : ''}">` +
      (depth ? `<i class="depth" style="width:${depth}px"></i>` : '') +
      `<span class="price">${price}</span><span class="qty">${amount}</span><span class="sum">${sum || ''}</span></div>`;
  }).join('');
}
renderRows('asks', asks);
renderRows('bids', bids);
```
